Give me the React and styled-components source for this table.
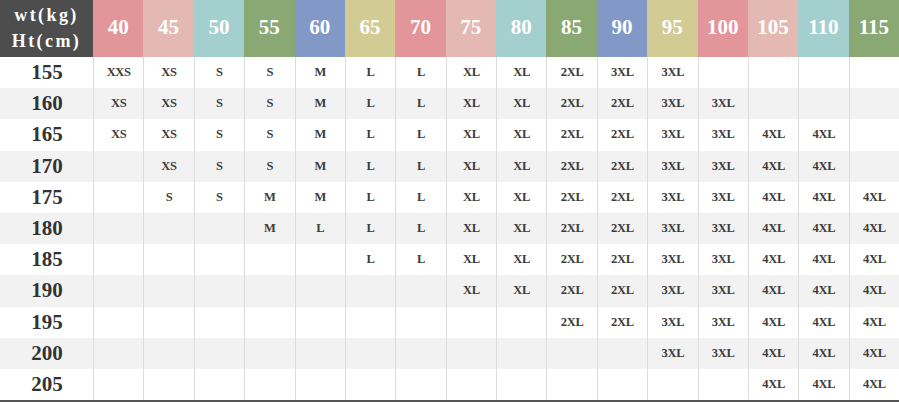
import React from 'react';
import styled, { createGlobalStyle } from 'styled-components';

const weights = [40, 45, 50, 55, 60, 65, 70, 75, 80, 85, 90, 95, 100, 105, 110, 115];
const palette = ['#e3969a', '#e4b9b3', '#a3cfce', '#89a873', '#8299c7', '#d2cc94'];

const rows = [
  [155, ['XXS', 'XS', 'S', 'S', 'M', 'L', 'L', 'XL', 'XL', '2XL', '3XL', '3XL', '', '', '', '']],
  [160, ['XS', 'XS', 'S', 'S', 'M', 'L', 'L', 'XL', 'XL', '2XL', '2XL', '3XL', '3XL', '', '', '']],
  [165, ['XS', 'XS', 'S', 'S', 'M', 'L', 'L', 'XL', 'XL', '2XL', '2XL', '3XL', '3XL', '4XL', '4XL', '']],
  [170, ['', 'XS', 'S', 'S', 'M', 'L', 'L', 'XL', 'XL', '2XL', '2XL', '3XL', '3XL', '4XL', '4XL', '']],
  [175, ['', 'S', 'S', 'M', 'M', 'L', 'L', 'XL', 'XL', '2XL', '2XL', '3XL', '3XL', '4XL', '4XL', '4XL']],
  [180, ['', '', '', 'M', 'L', 'L', 'L', 'XL', 'XL', '2XL', '2XL', '3XL', '3XL', '4XL', '4XL', '4XL']],
  [185, ['', '', '', '', '', 'L', 'L', 'XL', 'XL', '2XL', '2XL', '3XL', '3XL', '4XL', '4XL', '4XL']],
  [190, ['', '', '', '', '', '', '', 'XL', 'XL', '2XL', '2XL', '3XL', '3XL', '4XL', '4XL', '4XL']],
  [195, ['', '', '', '', '', '', '', '', '', '2XL', '2XL', '3XL', '3XL', '4XL', '4XL', '4XL']],
  [200, ['', '', '', '', '', '', '', '', '', '', '', '3XL', '3XL', '4XL', '4XL', '4XL']],
  [205, ['', '', '', '', '', '', '', '', '', '', '', '', '', '4XL', '4XL', '4XL']],
];

const SizeChart = () => {
  return (
    <>
      <GlobalStyle />
      <Table>
        <Corner>
          <span>wt(kg)</span>
          <span>Ht(cm)</span>
        </Corner>
        {weights.map((w, i) => (
          <WeightCell key={w} $bg={palette[i % palette.length]}>
            {w}
          </WeightCell>
        ))}
        {rows.map(([height, sizes], r) => (
          <React.Fragment key={height}>
            <HeightCell $alt={r % 2 === 1}>{height}</HeightCell>
            {sizes.map((s, c) => (
              <SizeCell key={c} $alt={r % 2 === 1}>
                {s}
              </SizeCell>
            ))}
          </React.Fragment>
        ))}
      </Table>
    </>
  );
};

const GlobalStyle = createGlobalStyle`
  body {
    margin: 0;
    background: #ffffff;
    font-family: "Liberation Serif", "Times New Roman", serif;
  }
`;

const Table = styled.div`
  display: grid;
  grid-template-columns: 93px repeat(16, 1fr);
  grid-template-rows: 57px repeat(11, 31.2px);
  width: 899px;
  border-bottom: 2px solid #555555;
`;

const Corner = styled.div`
  background-color: #4d4d4d;
  color: #ffffff;
  font-weight: bold;
  font-size: 18px;
  letter-spacing: 2.4px;
  line-height: 26px;
  display: flex;
  flex-direction: column;
  align-items: center;
  justify-content: center;
  padding-bottom: 2px;
`;

const WeightCell = styled.div`
  background-color: ${(p) => p.$bg};
  color: #ffffff;
  font-weight: bold;
  font-size: 21px;
  display: flex;
  align-items: center;
  justify-content: center;
  padding-bottom: 3px;
`;

const HeightCell = styled.div`
  background-color: ${(p) => (p.$alt ? '#f2f2f2' : '#ffffff')};
  color: #333333;
  font-weight: bold;
  font-size: 21px;
  display: flex;
  align-items: center;
  justify-content: center;
  padding-left: 1px;
`;

const SizeCell = styled.div`
  background-color: ${(p) => (p.$alt ? '#f2f2f2' : '#ffffff')};
  border-left: 1px solid #dcdcdc;
  color: #3c3c3c;
  font-weight: bold;
  font-size: 12.5px;
  letter-spacing: -0.3px;
  display: flex;
  align-items: center;
  justify-content: center;
`;

export default SizeChart;
